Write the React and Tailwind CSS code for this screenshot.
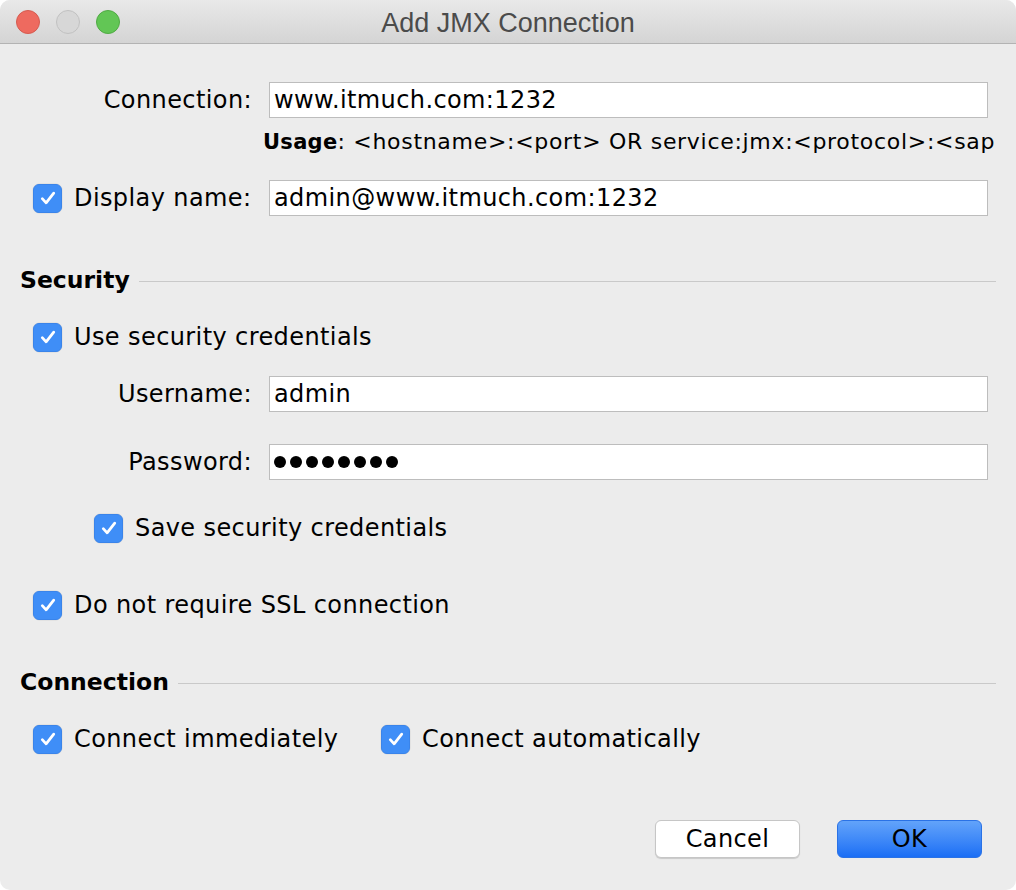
import React from 'react';

const font = { fontFamily: '"DejaVu Sans", "Noto Sans", sans-serif' };

const Check = () => (
    <span className="w-[29px] h-[29px] shrink-0 rounded-[6px] bg-[#3f8ef7] border border-[#3a84ea] flex items-center justify-center shadow-[0_0_0_0.5px_rgba(0,0,0,0.08)]">
        <svg width="22" height="22" viewBox="0 0 20 20" fill="none">
            <path d="M4.8 10.6 L8.3 14.4 L15.2 5.6" stroke="white" strokeWidth="2.5" strokeLinecap="round" strokeLinejoin="round" />
        </svg>
    </span>
);

const CheckLabel = ({ children, className = '' }) => (
    <label className={`flex items-center gap-[12px] h-[30px] ${className}`}>
        <Check />
        <span className="whitespace-nowrap">{children}</span>
    </label>
);

const Field = ({ value, password }) => (
    <div className="flex-1 mr-[8px] h-[36px] bg-white border border-[#bdbdbd] flex items-center pl-[4px] overflow-hidden">
        {password ? (
            <span className="flex gap-[4px]">
                {Array.from({ length: 8 }).map((_, i) => (
                    <span key={i} className="w-[12px] h-[12px] rounded-full bg-black"></span>
                ))}
            </span>
        ) : (
            <span className="whitespace-nowrap text-black">{value}</span>
        )}
    </div>
);

const Row = ({ label, children, className = '' }) => (
    <div className={`flex items-center ${className}`}>
        <div className="w-[249px] shrink-0 flex justify-end pr-[17px] whitespace-nowrap">{label}</div>
        {children}
    </div>
);

const Heading = ({ title, className = '' }) => (
    <div className={`flex items-center h-[30px] ${className}`}>
        <span className="font-bold text-[23.5px] tracking-normal mr-[9px]">{title}</span>
        <div className="flex-1 h-px bg-[#c9c9c9]"></div>
    </div>
);

export default function App() {
    return (
        <div className="w-[1016px] h-[890px] bg-white">
            <div className="w-full h-full rounded-[10px] overflow-hidden bg-[#ececec] flex flex-col" style={font}>
                {/* Title bar */}
                <div className="h-[44px] shrink-0 relative flex items-center justify-center pt-[3px] bg-gradient-to-b from-[#e9e9e9] to-[#d4d4d4] border-b border-[#b3b3b3]">
                    <div className="absolute left-[16px] top-[10px] flex gap-[16px]">
                        <span className="w-[24px] h-[24px] rounded-full bg-[#ee6a5f] border border-[#d55b50]"></span>
                        <span className="w-[24px] h-[24px] rounded-full bg-[#d7d7d7] border border-[#c1c1c1]"></span>
                        <span className="w-[24px] h-[24px] rounded-full bg-[#62c655] border border-[#50aa44]"></span>
                    </div>
                    <span className="text-[27px] text-[#4b4b4b]" style={{ fontFamily: '"Liberation Sans", Arial, sans-serif' }}>
                        Add JMX Connection
                    </span>
                </div>

                {/* Content */}
                <div className="flex-1 flex flex-col pl-[20px] pr-[20px] text-[24px] tracking-[0.4px] text-black">
                    <Row label="Connection:" className="mt-[38px]">
                        <Field value="www.itmuch.com:1232" />
                    </Row>

                    <div className="mt-[12px] h-[24px] pl-[243px] flex items-baseline whitespace-nowrap overflow-hidden leading-[24px]">
                        <span className="font-bold text-[21px] tracking-[0.3px]">Usage</span>
                        <span className="text-[22px] tracking-[0.7px]">: &lt;hostname&gt;:&lt;port&gt; OR service:jmx:&lt;protocol&gt;:&lt;sap</span>
                    </div>

                    <div className="flex items-center mt-[26px]">
                        <div className="w-[249px] shrink-0 pl-[13px]">
                            <CheckLabel>Display name:</CheckLabel>
                        </div>
                        <Field value="admin@www.itmuch.com:1232" />
                    </div>

                    <Heading title="Security" className="mt-[50px]" />

                    <CheckLabel className="mt-[26px] ml-[13px]">Use security credentials</CheckLabel>

                    <Row label="Username:" className="mt-[24px]">
                        <Field value="admin" />
                    </Row>

                    <Row label="Password:" className="mt-[32px]">
                        <Field password />
                    </Row>

                    <CheckLabel className="mt-[33px] ml-[74px]">Save security credentials</CheckLabel>

                    <CheckLabel className="mt-[47px] ml-[13px]">Do not require SSL connection</CheckLabel>

                    <Heading title="Connection" className="mt-[48px]" />

                    <div className="flex items-center mt-[26px] ml-[13px]">
                        <div className="w-[348px] shrink-0">
                            <CheckLabel>Connect immediately</CheckLabel>
                        </div>
                        <CheckLabel>Connect automatically</CheckLabel>
                    </div>

                    {/* Actions */}
                    <div className="flex justify-end gap-[37px] mt-[66px] pr-[14px]">
                        <button className="w-[145px] h-[38px] bg-white rounded-[6px] border border-[#c6c6c6] shadow-[0_1px_1px_rgba(0,0,0,0.15)] text-black">
                            Cancel
                        </button>
                        <button className="w-[145px] h-[38px] rounded-[6px] bg-gradient-to-b from-[#62a3fa] to-[#1a6ef5] border border-[#2a72e6] text-black">
                            OK
                        </button>
                    </div>
                </div>
            </div>
        </div>
    );
}
